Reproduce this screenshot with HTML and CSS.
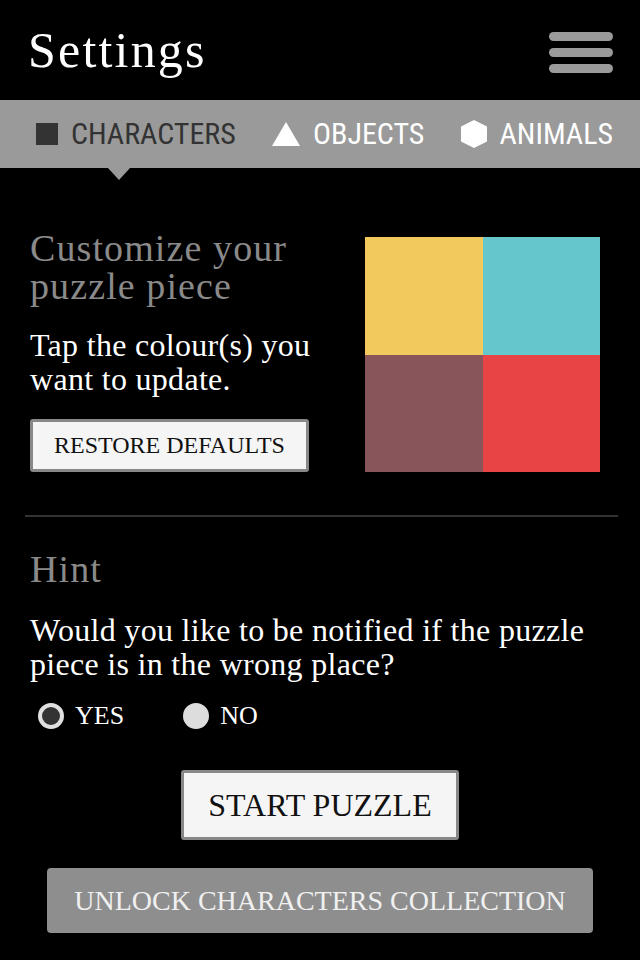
FILE: index.html
```html
<!DOCTYPE html>
<html lang="en">
<head>
<meta charset="utf-8">
<title>Settings</title>
<link rel="stylesheet" href="styles.css">
</head>
<body>
<div class="app">
  <header class="topbar">
    <h1 class="title">Settings</h1>
    <button class="menu" aria-label="Menu">
      <span class="bar"></span><span class="bar"></span><span class="bar"></span>
    </button>
  </header>

  <nav class="tabs">
    <a class="tab active">
      <svg class="tab-icon" viewBox="0 0 22 22" width="22" height="22"><rect x="0" y="0" width="22" height="22" fill="currentColor"/></svg>
      <span class="tab-label">CHARACTERS</span>
    </a>
    <a class="tab">
      <svg class="tab-icon" viewBox="0 0 28 24" width="28" height="24"><polygon points="14,0 28,24 0,24" fill="currentColor"/></svg>
      <span class="tab-label">OBJECTS</span>
    </a>
    <a class="tab">
      <svg class="tab-icon" viewBox="0 0 26 28" width="26" height="28"><polygon points="13,0 26,6.5 26,21.5 13,28 0,21.5 0,6.5" fill="currentColor"/></svg>
      <span class="tab-label">ANIMALS</span>
    </a>
  </nav>

  <section class="custom">
    <div class="custom-text">
      <h2 class="heading">Customize your puzzle piece</h2>
      <p class="body-text">Tap the colour(s) you want to update.</p>
      <button class="btn btn-restore">RESTORE DEFAULTS</button>
    </div>
    <div class="swatches">
      <div class="swatch yellow"></div>
      <div class="swatch cyan"></div>
      <div class="swatch brown"></div>
      <div class="swatch red"></div>
    </div>
  </section>

  <hr class="divider">

  <section class="hint">
    <h2 class="heading">Hint</h2>
    <p class="body-text">Would you like to be notified if the puzzle piece is in the wrong place?</p>
    <div class="radios">
      <label class="radio"><span class="dot checked"></span><span class="radio-label">YES</span></label>
      <label class="radio"><span class="dot"></span><span class="radio-label">NO</span></label>
    </div>
  </section>

  <div class="actions">
    <button class="btn btn-start">START PUZZLE</button>
    <button class="btn btn-unlock">UNLOCK CHARACTERS COLLECTION</button>
  </div>
</div>
</body>
</html>
```

FILE: styles.css
```css
* { box-sizing: border-box; }
html, body {
  margin: 0;
  padding: 0;
  background: #000;
}
body {
  width: 640px;
  height: 960px;
  overflow: hidden;
  font-family: "Liberation Serif", "DejaVu Serif", serif;
  color: #fff;
}
.app {
  display: flex;
  flex-direction: column;
}

/* header */
.topbar {
  height: 100px;
  display: flex;
  align-items: center;
  justify-content: space-between;
  padding: 0 27px 0 28px;
}
.title {
  margin: 0;
  font-weight: normal;
  font-size: 50px;
  letter-spacing: 2.2px;
  line-height: 1;
  color: #fff;
}
.menu {
  background: none;
  border: 0;
  padding: 0;
  display: flex;
  flex-direction: column;
  gap: 7px;
  margin-top: 4px;
}
.bar {
  display: block;
  width: 64px;
  height: 9px;
  border-radius: 5px;
  background: #9a9a9a;
}

/* tabs */
.tabs {
  position: relative;
  height: 68px;
  background: #9a9a9a;
  display: flex;
  align-items: center;
  justify-content: space-between;
  padding: 0 27px 0 36px;
  font-family: "Roboto Condensed", "DejaVu Sans Condensed", Roboto, sans-serif;
  font-stretch: condensed;
}
.tabs::after {
  content: "";
  position: absolute;
  left: 108px;
  top: 68px;
  border-left: 11px solid transparent;
  border-right: 11px solid transparent;
  border-top: 12px solid #9a9a9a;
}
.tab {
  display: flex;
  align-items: center;
  gap: 13px;
  color: #fff;
}
.tab.active { color: #333; }
.tab-icon { display: block; }
.tab-label {
  font-size: 30px;
  letter-spacing: 0;
  line-height: 1;
}

/* customize */
.custom {
  display: flex;
  justify-content: space-between;
  padding: 61px 40px 0 30px;
}
.heading {
  margin: 0;
  font-weight: normal;
  font-size: 38px;
  line-height: 38px;
  letter-spacing: 1.1px;
  color: #8a8a8a;
}
.custom .heading { width: 310px; }
.body-text {
  margin: 23px 0 0;
  font-size: 32px;
  line-height: 34px;
  letter-spacing: 0.3px;
  color: #fff;
}
.custom .body-text { width: 310px; }
.btn {
  font-family: "Liberation Serif", "DejaVu Serif", serif;
  cursor: pointer;
}
.btn-restore {
  margin-top: 23px;
  width: 279px;
  height: 53px;
  background: #f5f5f5;
  border: 3px solid #888;
  border-radius: 3px;
  font-size: 24px;
  color: #111;
  padding: 0;
}
.swatches {
  margin-top: 8px;
  width: 235px;
  height: 235px;
  display: grid;
  grid-template-columns: 1fr 1fr;
  grid-template-rows: 1fr 1fr;
}
.yellow { background: #f2c95c; }
.cyan { background: #65c6cc; }
.brown { background: #87555a; }
.red { background: #e84446; }

.divider {
  margin: 43px 22px 0 25px;
  border: 0;
  border-top: 2px solid #333;
  height: 0;
}

/* hint */
.hint {
  padding: 33px 30px 0 30px;
}
.hint .body-text { margin-top: 25px; }
.radios {
  margin-top: 19px;
  display: flex;
  align-items: center;
  gap: 59px;
  padding-left: 8px;
  height: 32px;
}
.radio {
  display: flex;
  align-items: center;
  gap: 11px;
}
.dot {
  width: 26px;
  height: 26px;
  border-radius: 50%;
  background: #ddd;
}
.dot.checked {
  background: #333;
  border: 4px solid #e0e0e0;
}
.radio-label {
  font-size: 26px;
  line-height: 32px;
  color: #fff;
}

/* actions */
.actions {
  display: flex;
  flex-direction: column;
  align-items: center;
  padding-top: 38px;
  gap: 28px;
}
.btn-start {
  width: 278px;
  height: 70px;
  background: #f5f5f5;
  border: 3px solid #888;
  border-radius: 3px;
  font-size: 32px;
  color: #111;
  padding: 0;
}
.btn-unlock {
  width: 546px;
  height: 65px;
  background: #8e8e8e;
  border: 0;
  border-radius: 4px;
  font-size: 28px;
  color: #f0f0f0;
  padding: 0;
}
```
